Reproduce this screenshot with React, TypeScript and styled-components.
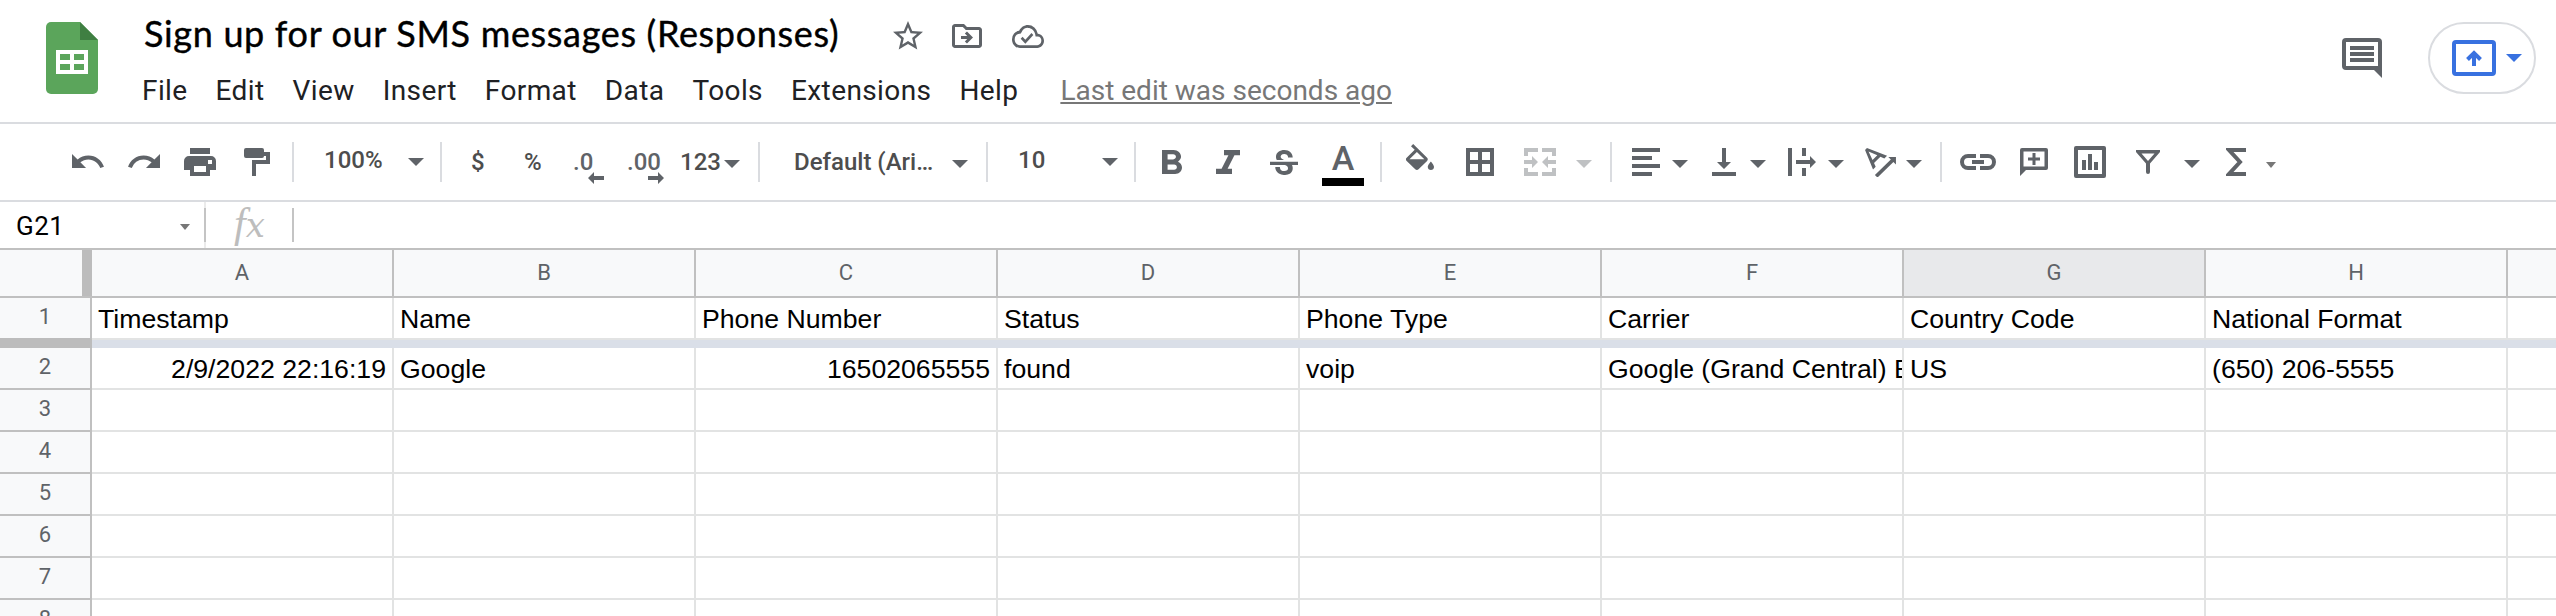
import React from 'react';
import styled, { createGlobalStyle } from 'styled-components';
import {
  MdFormatBold,
  MdFormatItalic,
  MdStrikethroughS,
  MdFormatColorFill,
  MdTextRotationAngleup,
  MdUndo,
  MdRedo,
  MdStarBorder,
  MdOutlineDriveFileMove,
  MdOutlineCloudDone,
} from 'react-icons/md';

const INK = '#5f6368';
const LINE = '#dadce0';
const HEAD_LINE = '#c0c0c0';
const CELL_LINE = '#e2e3e3';

const GlobalStyle = createGlobalStyle`
  * { box-sizing: border-box; }
  html, body { margin: 0; background: #fff; }
  body { font-family: Roboto, "Liberation Sans", sans-serif; overflow: hidden; }
  svg { display: block; flex: none; }
`;

const Page = styled.div`
  width: 2556px;
  height: 616px;
  display: flex;
  flex-direction: column;
  overflow: hidden;
`;

/* ---------- header ---------- */

const Header = styled.header`
  flex: none;
  height: 124px;
  display: flex;
  border-bottom: 2px solid ${LINE};
`;

const Logo = styled.div`
  width: 142px;
  padding: 22px 0 0 46px;
`;

const Heading = styled.div`
  flex: 1;
  display: flex;
  flex-direction: column;
`;

const TitleRow = styled.div`
  display: flex;
  align-items: center;
  height: 72px;
  color: ${INK};
`;

const Title = styled.h1`
  margin: 0 0 6px 2px;
  width: 746px;
  color: #000;
  font: 400 36px/44px Lato, sans-serif;
  letter-spacing: 0.67px;
  -webkit-text-stroke: 0.4px #000;
  white-space: nowrap;
`;

const TitleIcon = styled.span<{ $gap?: number }>`
  display: flex;
  margin-left: ${(p) => p.$gap ?? 0}px;
`;

const Menu = styled.nav`
  display: flex;
  gap: 28px;
  font-size: 28px;
  line-height: 32px;
  letter-spacing: 0.4px;
  color: #202124;
  padding-top: 3px;
`;

const LastEdit = styled.span`
  margin-left: 14px;
  letter-spacing: 0;
  color: #777;
  text-decoration: underline;
  text-decoration-thickness: 2px;
  text-underline-offset: 2px;
`;

const Actions = styled.div`
  display: flex;
  align-items: flex-start;
  padding: 22px 20px 0 0;
`;

const CommentButton = styled.div`
  padding: 16px 46px 0 0;
  color: ${INK};
`;

const PresentButton = styled.div`
  width: 108px;
  height: 72px;
  border: 2px solid ${LINE};
  border-radius: 36px;
  display: flex;
  align-items: center;
  gap: 10px;
  padding-left: 22px;
  color: #3871e0;
`;

/* ---------- toolbar ---------- */

const Toolbar = styled.div`
  flex: none;
  height: 78px;
  display: flex;
  align-items: center;
  border-bottom: 2px solid ${LINE};
  color: ${INK};
`;

const Tool = styled.div<{ $gap: number; $drop?: number; $muted?: boolean }>`
  flex: none;
  margin-left: ${(p) => p.$gap}px;
  margin-top: ${(p) => (p.$drop ?? 0) * 2}px;
  color: ${(p) => (p.$muted ? '#bfc1c3' : 'inherit')};
`;

const ToolText = styled.div<{ $gap: number; $width: number; $raise?: boolean }>`
  flex: none;
  margin-left: ${(p) => p.$gap}px;
  margin-bottom: ${(p) => (p.$raise ? 4 : 0)}px;
  width: ${(p) => p.$width}px;
  font-size: 24px;
  font-weight: 500;
  line-height: 28px;
  color: #4d4d4d;
  white-space: nowrap;
`;

const Decimal = styled(ToolText)`
  position: relative;
  color: ${INK};
`;

const DecimalArrow = styled.svg<{ $left: number }>`
  position: absolute;
  top: 24px;
  left: ${(p) => p.$left}px;
`;

const Separator = styled.div<{ $gap: number }>`
  flex: none;
  width: 2px;
  height: 40px;
  margin-left: ${(p) => p.$gap}px;
  background: ${LINE};
`;

const TextColor = styled.div`
  flex: none;
  margin-left: 24px;
  width: 42px;
  height: 48px;
  padding-top: 4px;
  text-align: center;
  border-bottom: 8px solid #000;
  font-size: 34px;
  font-weight: 500;
  line-height: 32px;
`;

/* ---------- formula bar ---------- */

const FormulaBar = styled.div`
  flex: none;
  height: 48px;
  display: flex;
  border-bottom: 2px solid ${HEAD_LINE};
`;

const NameBox = styled.div`
  width: 206px;
  display: flex;
  justify-content: space-between;
  padding: 9px 14px 0 16px;
  border-right: 2px solid #ebebeb;
  font-size: 26px;
  line-height: 30px;
  letter-spacing: 0.5px;
  color: #000;
  svg { margin-top: 13px; }
`;

const Fx = styled.div`
  width: 90px;
  height: 34px;
  margin: 6px 0 0 -2px;
  border-left: 2px solid #c4c4c4;
  border-right: 2px solid #c4c4c4;
  display: flex;
  align-items: baseline;
  padding-left: 28px;
  color: #bdbdbd;
  font: italic 42px/30px "Liberation Serif", serif;
`;

const FxArg = styled.span`
  font: italic 34px/30px "DejaVu Serif", serif;
`;

/* ---------- grid ---------- */

const ColumnHeads = styled.div`
  flex: none;
  height: 48px;
  display: flex;
  border-bottom: 2px solid ${HEAD_LINE};
  background: #f8f9fa;
`;

const Corner = styled.div`
  flex: none;
  width: 92px;
  border-right: 10px solid #bcbcbc;
`;

const ColumnHead = styled.div<{ $active?: boolean }>`
  flex: none;
  width: 302px;
  padding-top: 10px;
  border-right: 2px solid ${HEAD_LINE};
  background: ${(p) => (p.$active ? '#e8e9eb' : 'transparent')};
  color: ${INK};
  font-size: 22px;
  line-height: 26px;
  text-align: center;
`;

const Row = styled.div`
  flex: none;
  height: 42px;
  display: flex;
`;

const RowHead = styled.div<{ $frozen?: boolean }>`
  flex: none;
  width: 92px;
  padding-top: 6px;
  border-right: 2px solid ${HEAD_LINE};
  border-bottom: 2px solid ${(p) => (p.$frozen ? '#bcbcbc' : HEAD_LINE)};
  background: #f8f9fa;
  color: ${INK};
  font-size: 22px;
  line-height: 26px;
  text-align: center;
`;

const Cell = styled.div<{ $right?: boolean }>`
  flex: none;
  width: 302px;
  display: flex;
  align-items: flex-end;
  justify-content: ${(p) => (p.$right ? 'flex-end' : 'flex-start')};
  padding: 0 ${(p) => (p.$right ? 6 : 0)}px 4px 6px;
  border-right: 2px solid ${CELL_LINE};
  border-bottom: 2px solid ${CELL_LINE};
  overflow: hidden;
  color: #000;
  font: 26.667px/30px "Liberation Sans", Arial, sans-serif;
  white-space: nowrap;
`;

const FrozenBar = styled.div`
  flex: none;
  height: 8px;
  background: #dadfe8;
  border-left: 92px solid #bcbcbc;
`;

/* ---------- drawings ---------- */

const Sized = styled.span<{ $w: number; $h: number }>`
  display: block;
  svg {
    width: ${(p) => p.$w}px;
    height: ${(p) => p.$h}px;
  }
`;

const Glyph = ({ icon: Icon, box, w, h }: { icon: React.ComponentType<any>; box: string; w: number; h: number }) => (
  <Sized $w={w} $h={h}>
    <Icon viewBox={box} preserveAspectRatio="none" />
  </Sized>
);

const Caret = ({ w = 16, h = 8, fill = 'currentColor' }: { w?: number; h?: number; fill?: string }) => (
  <svg width={w} height={h} viewBox="0 0 16 8" preserveAspectRatio="none">
    <path d="M0 0h16L8 8z" fill={fill} />
  </svg>
);

const Draw = ({ w, h, d, rule }: { w: number; h: number; d: string; rule?: 'evenodd' }) => (
  <svg width={w} height={h} viewBox={`0 0 ${w} ${h}`}>
    <path d={d} fill="currentColor" fillRule={rule} />
  </svg>
);

const SheetsLogo = () => (
  <svg width="52" height="72" viewBox="0 0 52 72">
    <path d="M5 0h29l18 18v49a5 5 0 0 1-5 5H5a5 5 0 0 1-5-5V5a5 5 0 0 1 5-5z" fill="#5ba55b" />
    <path d="M34 0l18 18H34z" fill="#3f7f42" />
    <path d="M10 28h32v24H10zM14 32v6h10v-6zM28 32v6h10v-6zM14 42v6h10v-6zM28 42v6h10v-6z" fill="#fff" fillRule="evenodd" />
  </svg>
);

const COLUMNS = ['A', 'B', 'C', 'D', 'E', 'F', 'G', 'H'];
const MENU = ['File', 'Edit', 'View', 'Insert', 'Format', 'Data', 'Tools', 'Extensions', 'Help'];
const HEADINGS = ['Timestamp', 'Name', 'Phone Number', 'Status', 'Phone Type', 'Carrier', 'Country Code', 'National Format'];
const RECORD = ['2/9/2022 22:16:19', 'Google', '16502065555', 'found', 'voip', 'Google (Grand Central) B', 'US', '(650) 206-5555'];
const NUMERIC = [0, 2];

const GridRow = ({ n, values = [], frozen, numeric = [] }: { n: number; values?: string[]; frozen?: boolean; numeric?: number[] }) => (
  <Row>
    <RowHead $frozen={frozen}>{n}</RowHead>
    {COLUMNS.map((c, i) => (
      <Cell key={c} $right={numeric.includes(i)}>{values[i]}</Cell>
    ))}
    <Cell />
  </Row>
);

export default function App() {
  return (
    <Page>
      <GlobalStyle />
      <Header>
        <Logo><SheetsLogo /></Logo>
        <Heading>
          <TitleRow>
            <Title>Sign up for our SMS messages (Responses)</Title>
            <TitleIcon><MdStarBorder size={36} /></TitleIcon>
            <TitleIcon $gap={23}><MdOutlineDriveFileMove size={36} /></TitleIcon>
            <TitleIcon $gap={27}><Glyph icon={MdOutlineCloudDone} box="0 4 24 16" w={32} h={23} /></TitleIcon>
          </TitleRow>
          <Menu>
            {MENU.map((m) => <span key={m}>{m}</span>)}
            <LastEdit>Last edit was seconds ago</LastEdit>
          </Menu>
        </Heading>
        <Actions>
          <CommentButton>
            <Draw w={40} h={40} rule="evenodd" d="M4 0h32a4 4 0 0 1 4 4v36l-8-8H4a4 4 0 0 1-4-4V4a4 4 0 0 1 4-4zM4 4v24h32V4zM8 8h24v4H8zM8 14h24v4H8zM8 20h24v4H8z" />
          </CommentButton>
          <PresentButton>
            <svg width="44" height="36" viewBox="0 0 44 36" fill="none" stroke="currentColor" strokeWidth="4">
              <rect x="2" y="2" width="40" height="32" rx="2" />
              <path d="M22 26V13M15.500 19.500L22 13l6.500 6.500" />
            </svg>
            <Caret />
          </PresentButton>
        </Actions>
      </Header>

      <Toolbar>
        <Tool $gap={72} $drop={-1}><Glyph icon={MdUndo} box="2 7 20.5 9" w={32} h={14} /></Tool>
        <Tool $gap={24} $drop={-1}><Glyph icon={MdRedo} box="1.5 7 20.5 9" w={32} h={14} /></Tool>
        <Tool $gap={24}><Draw w={32} h={28} rule="evenodd" d="M6 0h20v6H6zM5 8h22a5 5 0 0 1 5 5v9h-6v6H6v-6H0v-9a5 5 0 0 1 5-5zM10 18v6h12v-6zM24 12v4h4v-4z" /></Tool>
        <Tool $gap={28}><Draw w={26} h={28} d="M2 0h16a2 2 0 0 1 2 2v2h6v12H12v12H8V12h14V8h-2a2 2 0 0 1-2 2H2a2 2 0 0 1-2-2V2a2 2 0 0 1 2-2z" /></Tool>
        <Separator $gap={22} />
        <ToolText $gap={30} $width={60} $raise>100%</ToolText>
        <Tool $gap={24}><Caret /></Tool>
        <Separator $gap={16} />
        <ToolText $gap={29} $width={14}>$</ToolText>
        <ToolText $gap={39} $width={20}>%</ToolText>
        <Decimal $gap={29} $width={32}>
          .0
          <DecimalArrow $left={15} width="16" height="12" viewBox="0 0 16 12"><path d="M0 6l6-6v4h10v4H6v4z" fill="currentColor" /></DecimalArrow>
        </Decimal>
        <Decimal $gap={22} $width={38}>
          .00
          <DecimalArrow $left={21} width="16" height="12" viewBox="0 0 16 12"><path d="M16 6l-6-6v4H0v4h10v4z" fill="currentColor" /></DecimalArrow>
        </Decimal>
        <ToolText $gap={15} $width={42}>123</ToolText>
        <Tool $gap={2} $drop={2}><Caret /></Tool>
        <Separator $gap={18} />
        <ToolText $gap={34} $width={140}>Default (Ari…</ToolText>
        <Tool $gap={18} $drop={2}><Caret /></Tool>
        <Separator $gap={18} />
        <ToolText $gap={30} $width={30} $raise>10</ToolText>
        <Tool $gap={54}><Caret /></Tool>
        <Separator $gap={16} />
        <Tool $gap={26}><Glyph icon={MdFormatBold} box="7 4 10.75 14" w={20} h={24} /></Tool>
        <Tool $gap={34}><Glyph icon={MdFormatItalic} box="6 4 12 14" w={24} h={24} /></Tool>
        <Tool $gap={30}><Glyph icon={MdStrikethroughS} box="3 3 18 15" w={28} h={25} /></Tool>
        <TextColor>A</TextColor>
        <Separator $gap={16} />
        <Tool $gap={24} $drop={-5}><Glyph icon={MdFormatColorFill} box="3 0 18 17" w={28} h={26} /></Tool>
        <Tool $gap={32}><Draw w={28} h={28} rule="evenodd" d="M0 0h28v28H0zM4 4v8h8V4zM16 4v8h8V4zM4 16v8h8v-8zM16 16v8h8v-8z" /></Tool>
        <Tool $gap={30} $muted><Draw w={32} h={28} d="M0 0h14v4H4v4H0zM18 0h14v8h-4V4H18zM0 20h4v4h10v4H0zM28 20h4v8H18v-4h10zM0 12h8V8l6 6-6 6v-4H0zM32 12h-8V8l-6 6 6 6v-4h8z" /></Tool>
        <Tool $gap={20} $drop={2} $muted><Caret /></Tool>
        <Separator $gap={18} />
        <Tool $gap={20}><Draw w={28} h={28} d="M0 0h28v4H0zM0 8h20v4H0zM0 16h28v4H0zM0 24h20v4H0z" /></Tool>
        <Tool $gap={12} $drop={2}><Caret /></Tool>
        <Tool $gap={24}><Draw w={24} h={28} d="M10 0h4v14h5l-7 7-7-7h5zM0 24h24v4H0z" /></Tool>
        <Tool $gap={14} $drop={2}><Caret /></Tool>
        <Tool $gap={22}><Draw w={28} h={28} d="M0 0h4v28H0zM14 0h4v8h-4zM14 20h4v8h-4zM8 12h14V8l6 6-6 6v-4H8z" /></Tool>
        <Tool $gap={12} $drop={2}><Caret /></Tool>
        <Tool $gap={21}><Glyph icon={MdTextRotationAngleup} box="3.4 4.2 17.2 16.5" w={31} h={29} /></Tool>
        <Tool $gap={10} $drop={2}><Caret /></Tool>
        <Separator $gap={18} />
        <Tool $gap={18} $drop={0}>
          <svg width="36" height="16" viewBox="0 0 36 16" fill="none" stroke="currentColor" strokeWidth="4">
            <path d="M16 2H8a6 6 0 0 0 0 12h8M20 2h8a6 6 0 0 1 0 12h-8M12 8h12" />
          </svg>
        </Tool>
        <Tool $gap={24}><Draw w={28} h={28} rule="evenodd" d="M2 0h24a2 2 0 0 1 2 2v18a2 2 0 0 1-2 2H6l-6 6V2a2 2 0 0 1 2-2zM3.500 3.500v15h21v-15zM12.500 5h3v4.500H20v3h-4.500V17h-3v-4.500H8v-3h4.500z" /></Tool>
        <Tool $gap={26}><Draw w={32} h={32} rule="evenodd" d="M2 0h28a2 2 0 0 1 2 2v28a2 2 0 0 1-2 2H2a2 2 0 0 1-2-2V2a2 2 0 0 1 2-2zM4 4v24h24V4zM8 14h4v10H8zM14 8h4v16h-4zM20 16h4v8h-4z" /></Tool>
        <Tool $gap={30}><Draw w={24} h={24} rule="evenodd" d="M0 0h24v2L14 13.500V22a2 2 0 0 1-4 0v-8.500L0 2zM5.500 3.500L12 11l6.500-7.500z" /></Tool>
        <Tool $gap={24} $drop={2}><Caret /></Tool>
        <Tool $gap={26}>
          <svg width="20" height="28" viewBox="0 0 20 28" fill="none" stroke="currentColor" strokeWidth="4">
            <path d="M20 2H3l11 12L3 26h17" />
          </svg>
        </Tool>
        <Tool $gap={20} $drop={3}><Caret w={10} h={6} fill="#777" /></Tool>
      </Toolbar>

      <FormulaBar>
        <NameBox>G21<Caret w={10} h={6} fill="#777" /></NameBox>
        <Fx>f<FxArg>x</FxArg></Fx>
      </FormulaBar>

      <ColumnHeads>
        <Corner />
        {COLUMNS.map((c) => <ColumnHead key={c} $active={c === 'G'}>{c}</ColumnHead>)}
        <ColumnHead />
      </ColumnHeads>
      <GridRow n={1} values={HEADINGS} frozen />
      <FrozenBar />
      <GridRow n={2} values={RECORD} numeric={NUMERIC} />
      {[3, 4, 5, 6, 7, 8].map((n) => <GridRow key={n} n={n} />)}
    </Page>
  );
}
